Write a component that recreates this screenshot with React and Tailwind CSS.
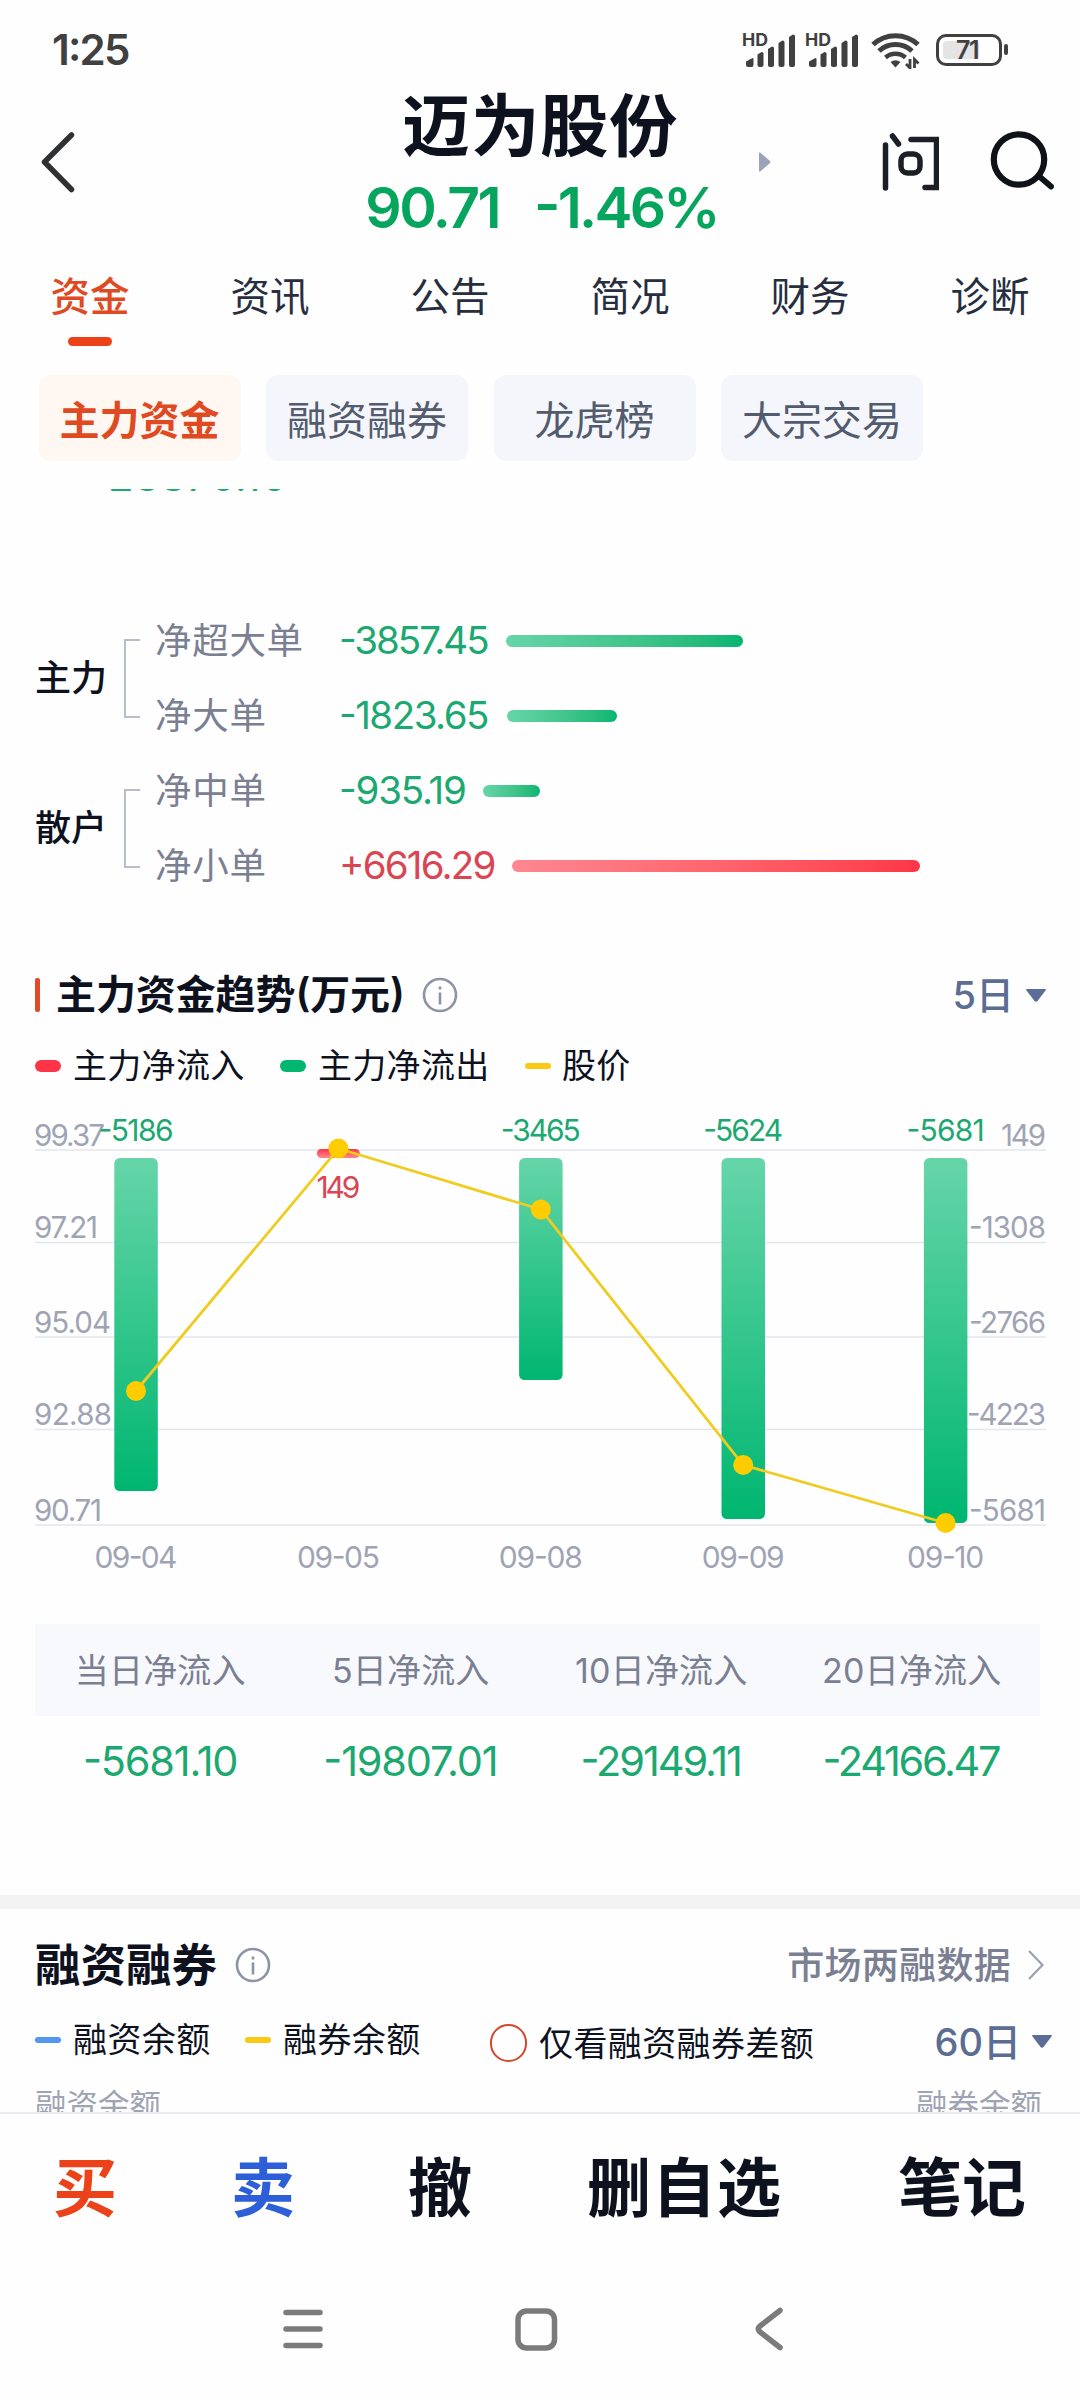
const tabs = ['资金', '资讯', '公告', '简况', '财务', '诊断'];

const chips = ['主力资金', '融资融券', '龙虎榜', '大宗交易'];

const orderGroups = [
  {
    name: '主力',
    rows: [
      { label: '净超大单', value: '-3857.45', spacing: -2, valueWidth: 167, barWidth: 237 },
      { label: '净大单', value: '-1823.65', spacing: -1.500, valueWidth: 168, barWidth: 110 },
    ],
  },
  {
    name: '散户',
    rows: [
      { label: '净中单', value: '-935.19', spacing: -1.200, valueWidth: 144, barWidth: 57 },
      { label: '净小单', value: '+6616.29', spacing: -1.800, valueWidth: 173, barWidth: 408 },
    ],
  },
];

const days = [
  { date: '09-04', flow: -5186, barEnd: 1491, priceY: 1391, labelWidth: 75, dateWidth: 83 },
  { date: '09-05', flow: 149, barEnd: 1158, priceY: 1148.5, labelWidth: 44, dateWidth: 83 },
  { date: '09-08', flow: -3465, barEnd: 1380, priceY: 1209.5, labelWidth: 80, dateWidth: 84 },
  { date: '09-09', flow: -5624, barEnd: 1519, priceY: 1465, labelWidth: 80, dateWidth: 83 },
  { date: '09-10', flow: -5681, barEnd: 1523, priceY: 1523, labelWidth: 78, dateWidth: 77 },
];

const axis = [
  { y: 1150, price: '99.37', pw: 71, flow: '149', fw: 45 },
  { y: 1242.5, price: '97.21', pw: 64, flow: '-1308', fw: 77 },
  { y: 1337, price: '95.04', pw: 77, flow: '-2766', fw: 77 },
  { y: 1429.5, price: '92.88', pw: 78, flow: '-4223', fw: 79 },
  { y: 1525, price: '90.71', pw: 68, flow: '-5681', fw: 77 },
];

const totals = [
  { label: '当日净流入', value: '-5681.10', spacing: -1.200 },
  { label: '5日净流入', value: '-19807.01', spacing: -1.200 },
  { label: '10日净流入', value: '-29149.11', spacing: -2.100 },
  { label: '20日净流入', value: '-24166.47', spacing: -2.300 },
];

function Signal() {
  return (
    <svg width="54" height="36" viewBox="0 0 54 36" fill="#404040" className="overflow-visible">
      <text x="-1" y="13.500" fontSize="17" fontWeight="700" textLength="26" lengthAdjust="spacingAndGlyphs">
        HD
      </text>
      <path d="M3 33v-3.5l6.5-3.5q1 0 1 1v6q0 2-2 2H5q-2 0-2-2z" />
      <path d="M14.500 22.500l4-2.500q2 0 2 1.500V33q0 2-2 2h-2q-2 0-2-2z" />
      <path d="M25 17l4-2.500q2 0 2 1.500v17q0 2-2 2h-2q-2 0-2-2z" />
      <path d="M35.500 11l4-2.500q2 0 2 1.500v23q0 2-2 2h-2q-2 0-2-2z" />
      <path d="M46 5l4-2.500q2 0 2 1.500v29q0 2-2 2h-2q-2 0-2-2z" />
    </svg>
  );
}

function Wifi() {
  return (
    <svg width="50" height="38" viewBox="0 0 50 38" fill="none" stroke="#404040">
      <path d="M2 13.500a33 33 0 0 1 45 0" strokeWidth="5" />
      <path d="M8 20a24 24 0 0 1 33 0" strokeWidth="5" />
      <path d="M14.500 26.500a15 15 0 0 1 20 0" strokeWidth="4.500" />
      <path d="M19.500 31q5-3.500 10 0l-5 5.500z" fill="#404040" stroke="none" />
      <path d="M39 28v9l-4-4M43.500 37v-8.500l4 4" strokeWidth="2.800" />
    </svg>
  );
}

function Battery() {
  return (
    <div className="flex items-center gap-[2px]">
      <div className="flex h-[32px] w-[66px] rounded-[10px] border-[3.500px] border-[#404040] p-[4px]">
        <div className="flex h-full w-[36px] rounded-[4px] bg-[#e4e4e4] pl-[13px] text-[25px] leading-[18px] font-semibold tracking-[-1.5px] text-[#404040]">
          71
        </div>
      </div>
      <div className="h-[11px] w-[4px] rounded-[2px] bg-[#404040]" />
    </div>
  );
}

function StatusBar() {
  return (
    <div className="flex h-[84px] items-center justify-between pt-[15px] pr-[72px] pl-[52px]">
      <span className="text-[42px] leading-[43px] font-semibold tracking-[-1.800px] text-[#404040]">1:25</span>
      <div className="flex items-center">
        <div className="flex gap-[9px]">
          <Signal />
          <Signal />
        </div>
        <div className="ml-[11px]">
          <Wifi />
        </div>
        <div className="ml-[15px]">
          <Battery />
        </div>
      </div>
    </div>
  );
}

function Header() {
  return (
    <header className="grid h-[166px] grid-cols-[320px_1fr_320px]">
      <div className="flex items-center pb-[10px] pl-[40px]">
        <svg width="36" height="64" viewBox="0 0 36 64" fill="none" stroke="#303133" strokeWidth="5.500" strokeLinecap="round" strokeLinejoin="round">
          <path d="M31.500 5L4.500 32l27 27.500" />
        </svg>
      </div>
      <div className="flex flex-col items-center">
        <h1 className="h-[82px] text-[68.500px] leading-[86px] font-bold tracking-[0.5px] whitespace-nowrap text-[#0d121e]">
          迈为股份
        </h1>
        <div className="flex h-[84px] gap-[35px] pl-[3px] text-[57px] leading-[84px] font-semibold whitespace-nowrap text-[#06a55e]">
          <span className="tracking-[-2.500px]">90.71</span>
          <span className="tracking-[-2.800px]">-1.46%</span>
        </div>
      </div>
      <div className="flex items-center pb-[10px]">
        <svg width="12" height="20" viewBox="0 0 12 20" className="ml-[-1px]">
          <path d="M0 1.500Q0 0 1.500 .8L11 9q.8 1 0 2L1.500 19.200Q0 20 0 18.500z" fill="#9ba3b8" />
        </svg>
        <svg width="58" height="62" viewBox="0 0 58 62" className="ml-[110px]" fill="none" stroke="#1c2026" strokeWidth="5.500" strokeLinecap="round">
          <path d="M4.500 14v43M11.500 5l6 8M30 8.500h25.500v48H44" />
          <rect x="20" y="23" width="19" height="19" rx="6.500" />
        </svg>
        <svg width="66" height="64" viewBox="0 0 66 64" className="ml-[49px]" fill="none" stroke="#0f1317" strokeWidth="6.200" strokeLinecap="round">
          <circle cx="31" cy="29.500" r="25.200" />
          <path d="M52 47l11 9.500" strokeWidth="5.800" />
        </svg>
      </div>
    </header>
  );
}

function Tabs() {
  return (
    <nav className="grid h-[125px] grid-cols-6">
      {tabs.map((tab, i) => (
        <div key={tab} className="flex flex-col items-center">
          <span
            className={
              i === 0
                ? 'h-[87px] text-[39.500px] leading-[94px] font-medium text-[#e04a22]'
                : 'h-[87px] text-[39.500px] leading-[94px] text-[#272e40]'
            }
          >
            {tab}
          </span>
          {i === 0 && <span className="h-[9px] w-[44px] rounded-full bg-[#ec4219]" />}
        </div>
      ))}
    </nav>
  );
}

function Chips() {
  return (
    <div className="flex h-[86px] gap-[25.500px] pl-[38.500px]">
      {chips.map((chip, i) => (
        <span
          key={chip}
          className={
            i === 0
              ? 'w-[202px] rounded-[12px] bg-[#fff7f1] text-center text-[40px] leading-[91px] font-bold text-[#e04a22]'
              : 'w-[202px] rounded-[12px] bg-[#f4f6fb] text-center text-[40px] leading-[91px] text-[#535b6e]'
          }
        >
          {chip}
        </span>
      ))}
    </div>
  );
}

function OrderFlow() {
  return (
    <section>
      {orderGroups.map((group) => (
        <div key={group.name} className="flex h-[150px] items-center pl-[35px]">
          <span className="mt-[2px] w-[89px] text-[36px] leading-[40px] font-medium text-[#0d121e]">{group.name}</span>
          <div className="mt-[2px] h-[79px] w-[16px] border-2 border-r-0 border-[#b8bdc9]" />
          <div className="ml-[15px]">
            {group.rows.map((row) => {
              const up = row.value.startsWith('+');
              return (
                <div key={row.label} className="flex h-[75px] items-center">
                  <span className="mt-[3px] w-[184px] text-[36.500px] leading-[40px] tracking-[0.7px] text-[#7a8092]">{row.label}</span>
                  <span
                    className={
                      up
                        ? 'text-[38.500px] leading-[40px] whitespace-nowrap text-[#db4453]'
                        : 'text-[38.500px] leading-[40px] whitespace-nowrap text-[#1ba871]'
                    }
                    style={{ width: row.valueWidth, letterSpacing: row.spacing }}
                  >
                    {row.value}
                  </span>
                  <span
                    className={
                      up
                        ? 'mt-[2px] h-[12px] rounded-full bg-linear-to-r from-[#ff8791] to-[#ff3547]'
                        : 'mt-[2px] h-[12px] rounded-full bg-linear-to-r from-[#66d5a9] to-[#00b670]'
                    }
                    style={{ width: row.barWidth }}
                  />
                </div>
              );
            })}
          </div>
        </div>
      ))}
    </section>
  );
}

function InfoIcon() {
  return (
    <svg width="36" height="36" viewBox="0 0 36 36" fill="none" stroke="#8d93a5" strokeWidth="2.600">
      <circle cx="18" cy="18" r="16" />
      <path d="M18 15.500v12M18 9.500v3" />
    </svg>
  );
}

function Caret() {
  return (
    <svg width="20" height="13" viewBox="0 0 20 13">
      <path d="M1 0h18q1.500 0 .5 1.500L11.500 12q-1.500 1.500-3 0L.5 1.500Q-.5 0 1 0z" fill="#5b6d96" />
    </svg>
  );
}

function TrendChart() {
  const cx = (i) => 136 + i * 202.400;

  return (
    <svg width="1080" height="480" viewBox="0 1110 1080 480" className="block">
      <defs>
        <linearGradient id="outflow" x1="0" y1="0" x2="0" y2="1">
          <stop offset="0" stopColor="#66d5a9" />
          <stop offset="1" stopColor="#00b670" />
        </linearGradient>
        <linearGradient id="inflow" x1="0" y1="0" x2="0" y2="1">
          <stop offset="0" stopColor="#ff3547" />
          <stop offset="1" stopColor="#ff8791" />
        </linearGradient>
      </defs>

      {axis.map((row) => (
        <g key={row.y} fontSize="29.500" fill="#9ea4b4">
          <line x1="35" x2="1046" y1={row.y} y2={row.y} stroke="#e4e6ec" strokeWidth="1.600" />
          <text x="34" y={row.y - 4.500} textLength={row.pw}>{row.price}</text>
          <text x={1046 - row.fw} y={row.y - 4.500} textLength={row.fw}>{row.flow}</text>
        </g>
      ))}

      {days.map((day, i) =>
        day.flow > 0 ? (
          <rect key={day.date} x={cx(i) - 21.500} y="1149" width="43" height="9" rx="4.500" fill="url(#inflow)" />
        ) : (
          <rect key={day.date} x={cx(i) - 21.700} y="1158" width="43.500" height={day.barEnd - 1158} rx="5.500" fill="url(#outflow)" />
        )
      )}

      <polyline
        points={days.map((day, i) => `${cx(i)},${day.priceY}`).join(' ')}
        fill="none"
        stroke="#f0cb20"
        strokeWidth="2.800"
      />

      {days.map((day, i) => (
        <g key={day.date} fontSize="30">
          <circle cx={cx(i)} cy={day.priceY} r="10" fill="#ffcc00" />
          <text
            x={cx(i) - day.labelWidth / 2}
            y={day.flow > 0 ? 1198 : 1141}
            fill={day.flow > 0 ? '#db4453' : '#1ba871'}
            textLength={day.labelWidth}
          >
            {day.flow}
          </text>
          <text x={cx(i) - day.dateWidth / 2} y="1568" fill="#9ea4b4" textLength={day.dateWidth}>
            {day.date}
          </text>
        </g>
      ))}
    </svg>
  );
}

function TrendSection() {
  return (
    <section>
      <div className="flex h-[62px] items-center pr-[34px] pl-[35px]">
        <span className="h-[34px] w-[5px] rounded-[2px] bg-[#e04a28]" />
        <h2 className="ml-[16px] w-[350px] text-[40px] leading-[44px] font-semibold tracking-[-0.1px] whitespace-nowrap text-[#0d121e]">
          主力资金趋势(万元)
        </h2>
        <span className="ml-[16px]">
          <InfoIcon />
        </span>
        <span className="mr-[12px] ml-auto text-[38px] leading-[44px] font-medium text-[#5b6d92]">5日</span>
        <Caret />
      </div>
      <div className="mt-[2px] flex h-[76px] items-center pl-[35px] text-[34px] leading-[40px] tracking-[0.3px] text-[#0d121e]">
        <span className="h-[12px] w-[26px] rounded-full bg-[#ff3547]" />
        <span className="ml-[12px] w-[207px]">主力净流入</span>
        <span className="h-[12px] w-[26px] rounded-full bg-[#00b670]" />
        <span className="ml-[12px] w-[207px]">主力净流出</span>
        <span className="h-[6px] w-[26px] rounded-full bg-[#fbc914]" />
        <span className="ml-[11px]">股价</span>
      </div>
      <div className="mt-[6px]">
        <TrendChart />
      </div>
      <div className="mt-[34px] ml-[35px] w-[1005px]">
        <div className="grid h-[92px] grid-cols-4 bg-[#f8f9fc] pr-[3px] text-center text-[34px] leading-[94px] tracking-[0.2px] text-[#7a8092]">
          {totals.map((t) => (
            <span key={t.label}>{t.label}</span>
          ))}
        </div>
        <div className="grid h-[90px] grid-cols-4 pr-[4px] text-center text-[41.500px] leading-[90px] text-[#1ba871]">
          {totals.map((t) => (
            <span key={t.label} style={{ letterSpacing: t.spacing }}>
              {t.value}
            </span>
          ))}
        </div>
      </div>
    </section>
  );
}

function MarginSection() {
  return (
    <section className="h-[203px] overflow-hidden">
      <div className="flex h-[112px] items-center pr-[36px] pl-[35px]">
        <h2 className="mt-[2px] text-[45.500px] leading-[50px] font-semibold text-[#0d121e]">融资融券</h2>
        <span className="ml-[18px]">
          <InfoIcon />
        </span>
        <span className="mt-[2px] ml-auto text-[37px] leading-[40px] font-medium tracking-[0.3px] text-[#7a8092]">市场两融数据</span>
        <svg width="16" height="30" viewBox="0 0 16 30" className="ml-[17px]" fill="none" stroke="#9aa0b0" strokeWidth="2.200">
          <path d="M1 1l13.500 14L1 29" />
        </svg>
      </div>
      <div className="flex h-[37px] items-center pr-[28px] pl-[35px] text-[34px] leading-[37px] tracking-[0.4px] text-[#0d121e]">
        <span className="h-[6px] w-[26px] rounded-full bg-[#4f97f0]" />
        <span className="ml-[12px] w-[172px]">融资余额</span>
        <span className="h-[6px] w-[26px] rounded-full bg-[#fbc914]" />
        <span className="ml-[12px] w-[207px]">融券余额</span>
        <span className="mt-[6px] h-[38px] w-[37px] rounded-full border-2 border-[#d0492f]" />
        <span className="mt-[7px] ml-[12px]">仅看融资融券差额</span>
        <span className="mt-[6px] mr-[11px] ml-auto text-[38px] font-medium tracking-normal text-[#5b6d92]">60日</span>
        <span className="mt-[4px] flex">
          <Caret />
        </span>
      </div>
      <div className="mt-[28px] flex h-[40px] justify-between pr-[38px] pl-[35px] text-[31.500px] leading-[40px] text-[#9ea4b4]">
        <span>融资余额</span>
        <span>融券余额</span>
      </div>
    </section>
  );
}

function ActionBar() {
  return (
    <div className="flex h-[146px] border-t-2 border-[#e9ebf1] pl-[53px] text-[64px] leading-[148px] font-semibold whitespace-nowrap text-[#0d121e]">
      <span className="w-[178px] font-bold text-[#ec4219]">买</span>
      <span className="w-[177px] font-bold text-[#2d5fd8]">卖</span>
      <span className="w-[179px]">撤</span>
      <span className="w-[311px] tracking-[1px]">删自选</span>
      <span>笔记</span>
    </div>
  );
}

function SystemNav() {
  return (
    <div className="flex h-[142px] items-center pl-[282px]">
      <svg width="42" height="44" viewBox="0 0 42 44" stroke="#7b7b7b" strokeWidth="5.500" strokeLinecap="round">
        <path d="M4 5.500h34M4 22h34M4 38.500h34" />
      </svg>
      <svg width="44" height="44" viewBox="0 0 44 44" className="ml-[190px]" fill="none" stroke="#7b7b7b" strokeWidth="5.500">
        <rect x="4" y="4" width="36.500" height="37" rx="8.500" />
      </svg>
      <svg width="30" height="44" viewBox="0 0 30 44" className="ml-[196px]" fill="none" stroke="#7b7b7b" strokeWidth="5.500" strokeLinecap="round" strokeLinejoin="round">
        <path d="M26 3.500L5.500 19.500q-2.500 2.500 0 5L26 40.500" />
      </svg>
    </div>
  );
}

export default function App() {
  return (
    <div className="h-[2400px] w-[1080px] overflow-hidden bg-[#fefefe] font-[Inter,'Noto_Sans_CJK_SC',sans-serif] [font-feature-settings:'case']">
      <StatusBar />
      <Header />
      <Tabs />
      <Chips />
      <main className="flex h-[1651px] flex-col pt-[28px]">
        {/* total scrolled under the sticky header, only its lower edge shows */}
        <div className="h-[3px] overflow-hidden">
          <p className="mt-[-34px] pl-[108px] text-[42px] leading-[42px] tracking-[0.3px] text-[#1ba871]">23876.10</p>
        </div>
        <div className="mt-[110px]">
          <OrderFlow />
        </div>
        <div className="mt-[62px]">
          <TrendSection />
        </div>
        <div className="mt-[89px] h-[14px] shrink-0 bg-[#f3f3f3]" />
        <MarginSection />
      </main>
      <ActionBar />
      <SystemNav />
    </div>
  );
}
